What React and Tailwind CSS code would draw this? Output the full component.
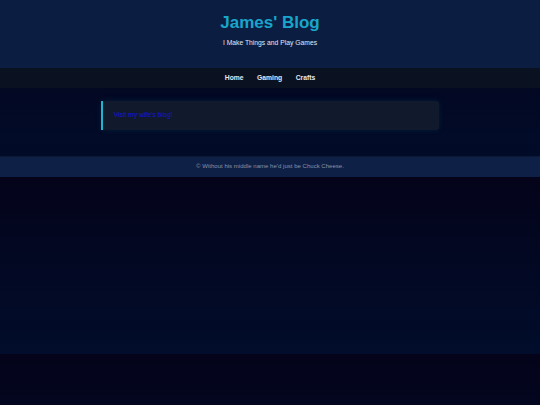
const NAV = ['Home', 'Gaming', 'Crafts'];

export default function App() {
  return (
    <div className="min-h-screen bg-[linear-gradient(180deg,#04031a_0%,#010d2b_100%)] bg-[length:100%_177px] bg-repeat font-['Liberation_Sans',Arial,sans-serif]">
      <header className="h-[67.5px] bg-[#0c1d42] flex flex-col items-center pt-[13px]">
        <h1 className="text-[17px] leading-[20px] font-bold text-[#19a6cb]">James' Blog</h1>
        <p className="mt-[4.5px] text-[6.75px] leading-[9px] text-[#e3e8f2]">I Make Things and Play Games</p>
      </header>

      <nav className="h-[20.5px] bg-[#0a1222] flex items-center justify-center gap-[13.5px]">
        {NAV.map(n => (
          <a key={n} href="#" className="text-[6.75px] font-bold text-[#e5e8ee]">{n}</a>
        ))}
      </nav>

      <main className="h-[68px] pt-[13px]">
        <div className="mx-auto w-[337.5px] h-[28.5px] flex items-center pl-[10.5px] bg-[#111a2d] border-l-[2.25px] border-[#22b4cc] rounded-r-[3px] shadow-[0_0_6px_rgba(34,180,204,0.12)]">
          <a href="#" className="text-[6.75px] text-[#1414d8]">Visit my wife's blog!</a>
        </div>
      </main>

      <footer className="h-[21px] bg-[#0e2046] border-t border-[#0b1836] flex items-center justify-center">
        <p className="text-[6.05px] text-[#8891a6]">© Without his middle name he'd just be Chuck Cheese.</p>
      </footer>
    </div>
  );
}
